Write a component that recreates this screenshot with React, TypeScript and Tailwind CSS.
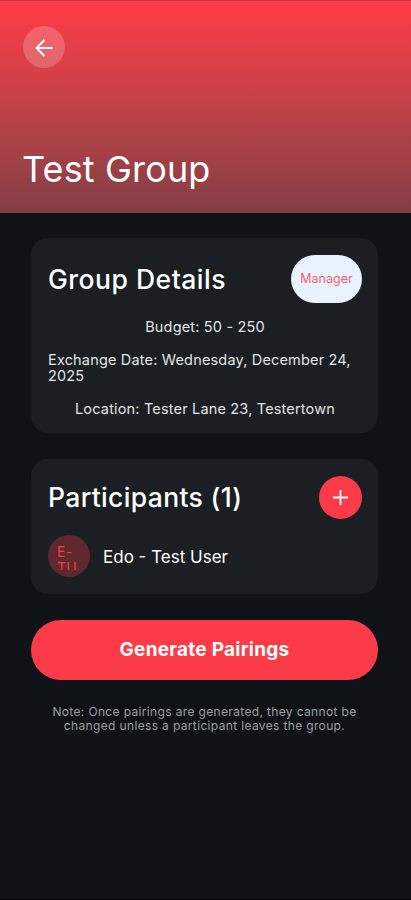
import type { ReactNode } from "react";

const group = {
  name: "Test Group",
  budget: "50 - 250",
  date: "Wednesday, December 24, 2025",
  location: "Tester Lane 23, Testertown",
  participants: [{ name: "Edo - Test User", initials: "E-TU" }],
};

function Card({ children }: { children: ReactNode }) {
  return (
    <section className="rounded-[17px] bg-[#1b1f23] pt-[17px] pr-4 pl-[17px]">
      {children}
    </section>
  );
}

export default function App() {
  return (
    <main className="flex min-h-screen flex-col border-b border-black bg-[#0f1317] font-['Inter',sans-serif] text-white">
      {/* Header */}
      <header className="flex h-[212.5px] flex-col items-start justify-between border-t border-[#c4343f] bg-linear-to-b from-[#fb3b47] from-5% to-[#823e45] px-[23px] pt-[25px] pb-[22px]">
        <button
          aria-label="Back"
          className="flex size-[42px] items-center justify-center rounded-full bg-white/20"
        >
          <svg
            viewBox="0 0 18 18"
            className="size-[18px] translate-y-px"
            fill="none"
            stroke="currentColor"
            strokeWidth="2"
          >
            <path d="M17.5 9H2M9.4 1L1.5 9l7.9 8" />
          </svg>
        </button>
        <h1 className="-ml-px text-[36px] leading-[44px] tracking-[0.15px]">
          {group.name}
        </h1>
      </header>

      <div className="flex flex-col pr-[33px] pl-[31px] pt-[25.5px]">
        {/* Group details */}
        <Card>
          <div className="flex h-12 items-center justify-between">
            <h2 className="text-[26.5px] leading-8 font-medium tracking-[0.5px]">
              Group Details
            </h2>
            <span className="flex h-12 w-[71px] items-center justify-center rounded-[24px] bg-[#e9f3ff] text-[12.5px] text-[#f7606b]">
              Manager
            </span>
          </div>
          <div className="flex flex-col items-center gap-[16.5px] pt-4 pb-4 text-[14.5px] leading-[16.2px] tracking-[0.17px] text-[#e1e3e5]">
            <p>Budget: {group.budget}</p>
            <p>Exchange Date: {group.date}</p>
            <p>Location: {group.location}</p>
          </div>
        </Card>

        {/* Participants */}
        <div className="mt-[26px]">
          <Card>
            <div className="flex h-[43px] items-center justify-between">
              <h2 className="text-[26.5px] leading-8 font-medium tracking-[0.35px]">
                Participants ({group.participants.length})
              </h2>
              <button
                aria-label="Add participant"
                className="flex size-[43px] items-center justify-center rounded-full bg-[#fb3b47]"
              >
                <svg
                  viewBox="0 0 15 15"
                  className="size-[15px]"
                  fill="none"
                  stroke="currentColor"
                  strokeWidth="1.8"
                >
                  <path d="M7.5 0v15M0 7.5h15" />
                </svg>
              </button>
            </div>
            {group.participants.map((p) => (
              <div
                key={p.name}
                className="flex items-center gap-[13px] pt-4 pb-[17px]"
              >
                <div className="size-[42px] rounded-full bg-[#5f282e] px-[9px] pt-[9px]">
                  <div className="h-[26px] w-6 overflow-hidden text-[14px] leading-4 tracking-[0.3px] break-words text-[#f53b47]">
                    {p.initials}
                  </div>
                </div>
                <span className="translate-y-px text-[17px] leading-6">
                  {p.name}
                </span>
              </div>
            ))}
          </Card>
        </div>

        <button className="mt-[26px] h-[60px] rounded-full bg-[#fb3b47] text-[19px] leading-6 font-bold tracking-[0.25px]">
          Generate Pairings
        </button>

        <p className="mt-[25px] px-4 text-center text-[12px] leading-[14px] tracking-[0.35px] text-[#9a9da1]">
          Note: Once pairings are generated, they cannot be changed unless a
          participant leaves the group.
        </p>
      </div>
    </main>
  );
}
